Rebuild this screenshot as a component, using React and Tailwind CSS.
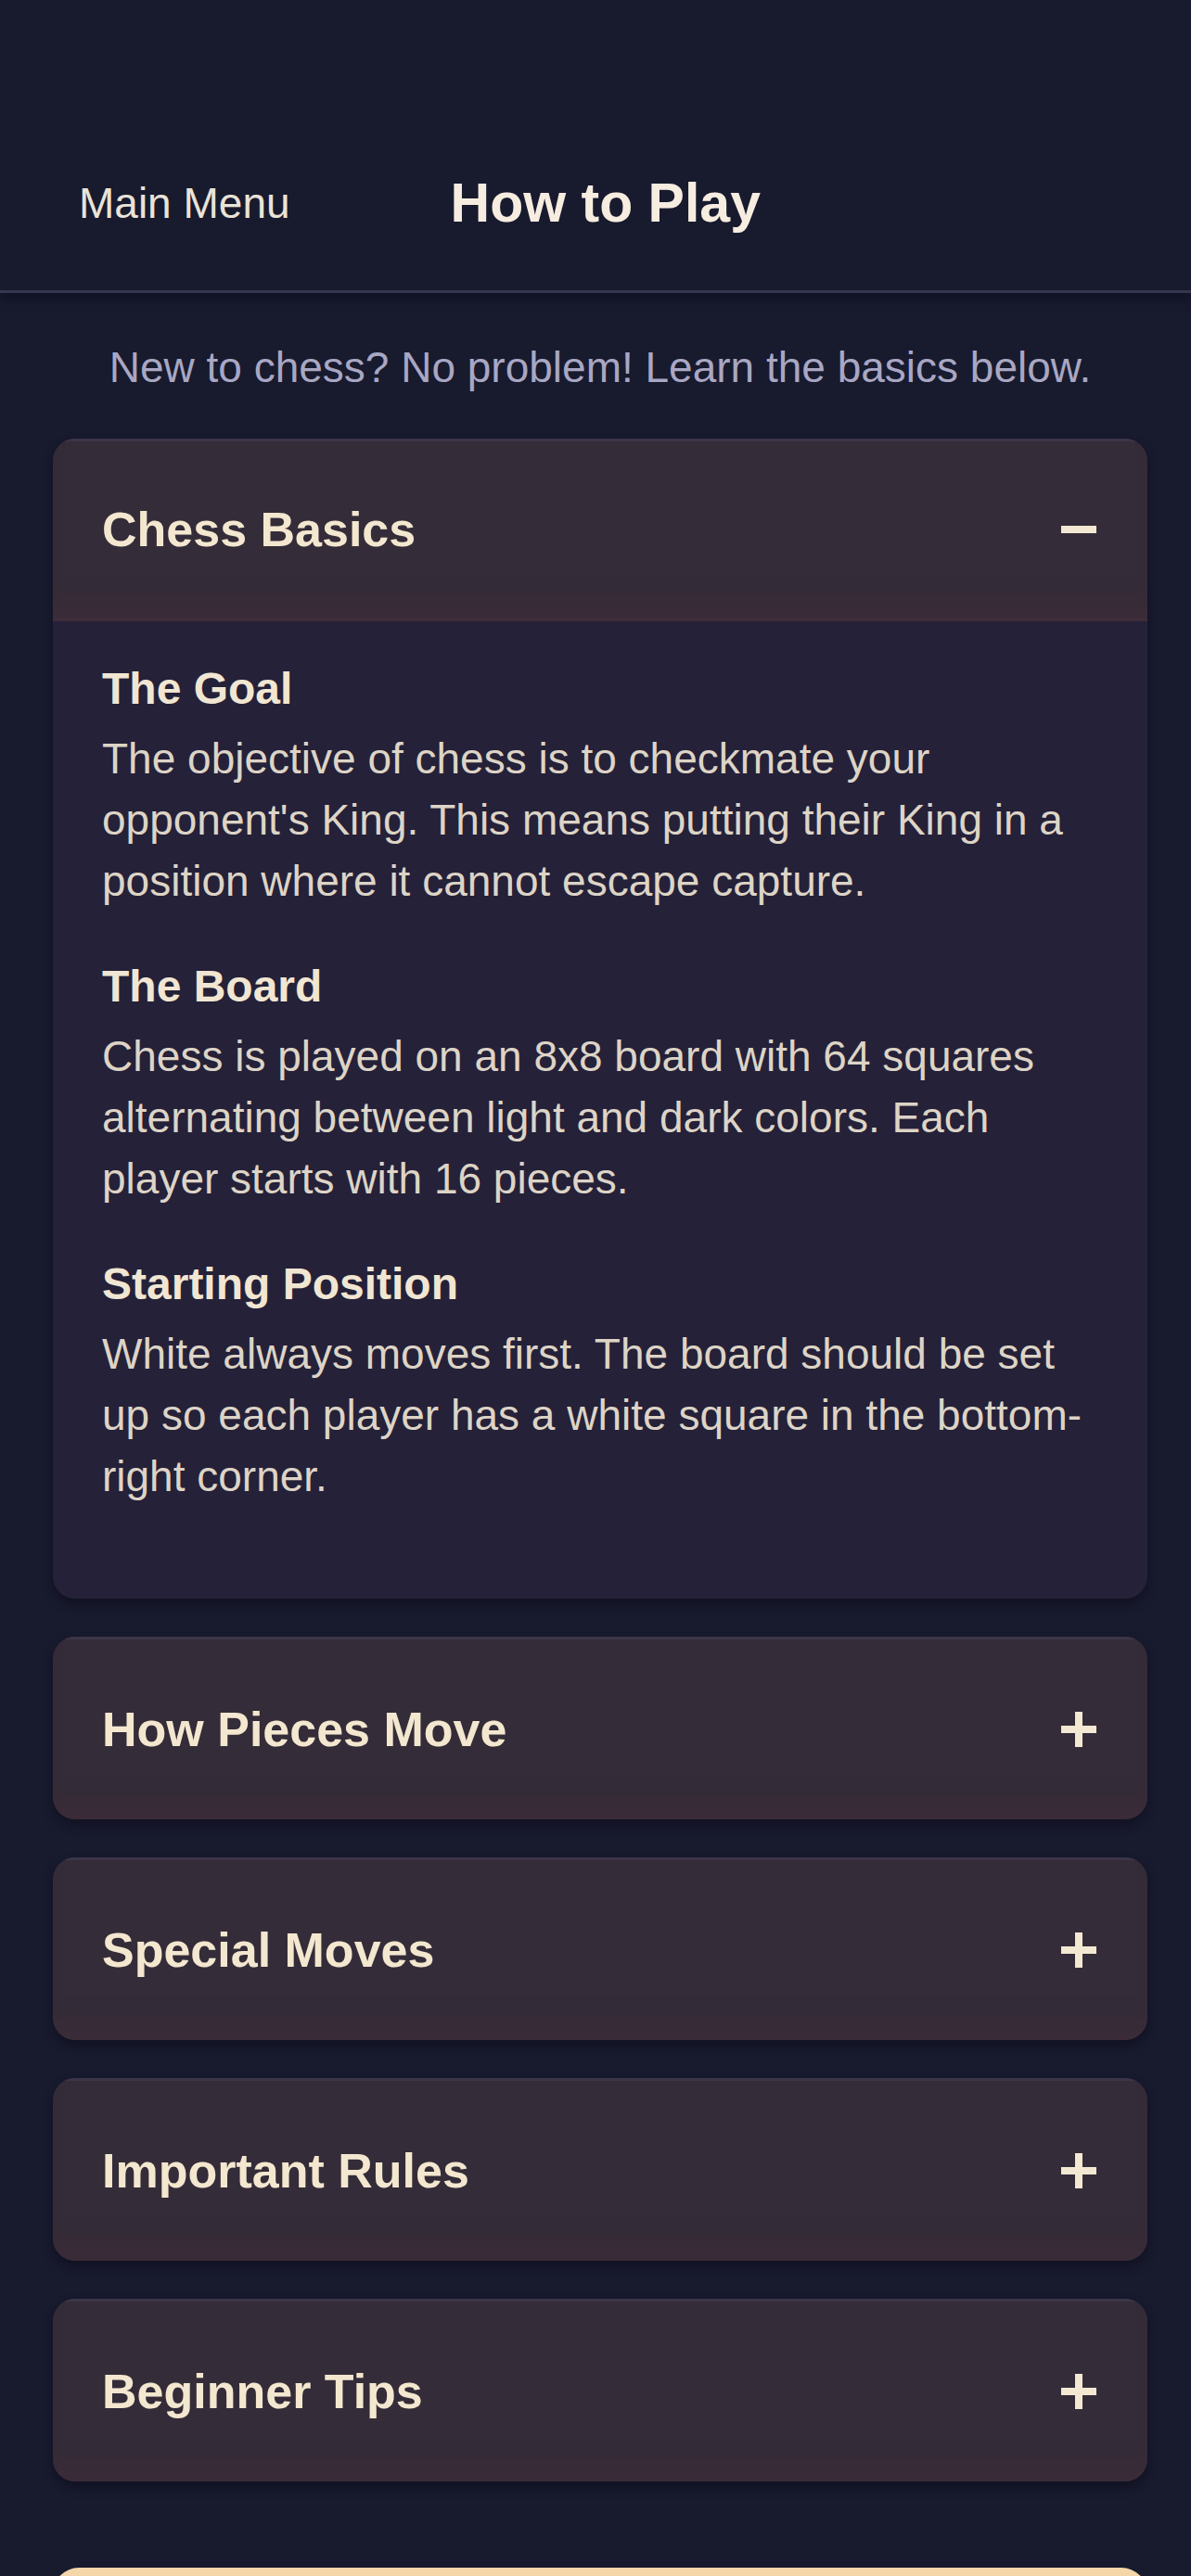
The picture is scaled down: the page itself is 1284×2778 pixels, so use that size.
import { useState } from 'react';

const SECTIONS = [
  {
    id: 'basics',
    title: 'Chess Basics',
    items: [
      {
        heading: 'The Goal',
        text: "The objective of chess is to checkmate your opponent's King. This means putting their King in a position where it cannot escape capture.",
      },
      {
        heading: 'The Board',
        text: 'Chess is played on an 8x8 board with 64 squares alternating between light and dark colors. Each player starts with 16 pieces.',
      },
      {
        heading: 'Starting Position',
        text: 'White always moves first. The board should be set up so each player has a white square in the bottom-right corner.',
      },
    ],
  },
  { id: 'moves', title: 'How Pieces Move', items: [] },
  { id: 'special', title: 'Special Moves', items: [] },
  { id: 'rules', title: 'Important Rules', items: [] },
  { id: 'tips', title: 'Beginner Tips', items: [] },
];

// plus / minus toggle glyph
function ToggleIcon({ open }) {
  return (
    <svg width="48" height="48" viewBox="0 0 48 48" className="shrink-0">
      <line x1="5" y1="24" x2="43" y2="24" stroke="#f3e8d2" strokeWidth="8" />
      {!open && <line x1="24" y1="5" x2="24" y2="43" stroke="#f3e8d2" strokeWidth="8" />}
    </svg>
  );
}

function Section({ section, open, onToggle }) {
  return (
    <div className="rounded-[24px] overflow-hidden bg-[#252139] shadow-[0_6px_12px_rgba(8,8,20,0.45)]">
      <button
        onClick={onToggle}
        className={
          'w-full h-[197px] flex items-center justify-between pl-[53px] pr-[50px] bg-[#342c38] border-t-[3px] border-[#3b3547] shadow-[inset_0_-34px_26px_-18px_rgba(66,44,56,0.55)] text-left cursor-pointer ' +
          (open ? 'border-b-[4px] border-b-[#3d2c39]' : '')
        }
      >
        <span className="text-[52px] font-bold text-[#f3e7cf]">{section.title}</span>
        <ToggleIcon open={open} />
      </button>

      {open && (
        <div className="px-[53px] pt-[43px] pb-[99px] flex flex-col gap-[51px]">
          {section.items.map((item) => (
            <div key={item.heading}>
              <h3 className="text-[48px] leading-[60px] font-bold text-[#f1e6d2] mb-[12px]">{item.heading}</h3>
              <p className="text-[46px] leading-[66px] text-[#ddd4c6]">{item.text}</p>
            </div>
          ))}
        </div>
      )}
    </div>
  );
}

export default function App() {
  const [openId, setOpenId] = useState('basics');

  return (
    <div className="min-h-screen bg-[#181a2e] font-['Liberation_Sans',Arial,sans-serif] select-none">
      {/* Top bar */}
      <header className="h-[316px] pt-[126px] pl-[85px] flex items-center border-b-[3px] border-[#33364e] shadow-[0_8px_10px_rgba(6,8,20,0.35)]">
        <button className="text-[46px] text-[#e9e3d8] cursor-pointer">Main Menu</button>
        <h1 className="ml-[173px] text-[59px] font-bold text-[#f6ede0]">How to Play</h1>
      </header>

      <main className="pl-[57px] pr-[47px] pt-[47px] pb-[60px]">
        <p className="text-center text-[46px] leading-[67px] text-[#a8a7c3] mb-[43px]">
          New to chess? No problem! Learn the basics below.
        </p>

        <div className="flex flex-col gap-[41px]">
          {SECTIONS.map((s) => (
            <Section
              key={s.id}
              section={s}
              open={openId === s.id}
              onToggle={() => setOpenId(openId === s.id ? null : s.id)}
            />
          ))}
        </div>

        {/* start button, only its top edge is in view */}
        <button aria-label="Start Playing" className="mt-[93px] w-full h-[150px] rounded-[28px] bg-[#f4d6a8]" />
      </main>
    </div>
  );
}
